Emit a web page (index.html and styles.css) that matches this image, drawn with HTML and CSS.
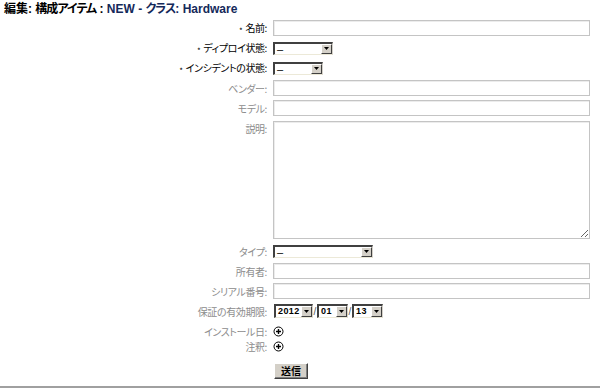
FILE: index.html
```html
<!DOCTYPE html>
<html lang="ja">
<head>
    <meta charset="UTF-8">
    <title>編集: 構成アイテム</title>
    <link rel="stylesheet" href="styles.css">
</head>
<body>

    <h1 class="titulo">編集: <span class="kana">構成アイテム</span> : <span class="destaque">NEW - <span class="kana">クラス</span>: Hardware</span></h1>

    <form class="formulario" id="formItem">
        <div class="linha obrigatorio">
            <label for="nome"><span class="marca">*</span>名前:</label>
            <input type="text" id="nome" class="texto">
        </div>
        <div class="linha obrigatorio">
            <label><span class="marca">*</span>ディプロイ状態:</label>
            <span class="seletor seletor-implantacao"><span class="valor">–</span><span class="seta"><svg width="5" height="3" viewBox="0 0 5 3"><path d="M0 0h5L2.5 3z" fill="#000"/></svg></span></span>
        </div>
        <div class="linha obrigatorio">
            <label><span class="marca">*</span>インシデントの状態:</label>
            <span class="seletor seletor-incidente"><span class="valor">–</span><span class="seta"><svg width="5" height="3" viewBox="0 0 5 3"><path d="M0 0h5L2.5 3z" fill="#000"/></svg></span></span>
        </div>
        <div class="linha">
            <label for="fornecedor">ベンダー:</label>
            <input type="text" id="fornecedor" class="texto">
        </div>
        <div class="linha">
            <label for="modelo">モデル:</label>
            <input type="text" id="modelo" class="texto">
        </div>
        <div class="linha linha-alta">
            <label for="descricao">説明:</label>
            <textarea id="descricao" class="descricao"></textarea>
        </div>
        <div class="linha">
            <label>タイプ:</label>
            <span class="seletor seletor-tipo"><span class="valor">–</span><span class="seta"><svg width="5" height="3" viewBox="0 0 5 3"><path d="M0 0h5L2.5 3z" fill="#000"/></svg></span></span>
        </div>
        <div class="linha">
            <label for="dono">所有者:</label>
            <input type="text" id="dono" class="texto">
        </div>
        <div class="linha">
            <label for="serie">シリアル番号:</label>
            <input type="text" id="serie" class="texto">
        </div>
        <div class="linha">
            <label>保証の有効期限:</label>
            <div class="data">
                <span class="seletor seletor-ano"><span class="valor numero">2012</span><span class="seta"><svg width="5" height="3" viewBox="0 0 5 3"><path d="M0 0h5L2.5 3z" fill="#000"/></svg></span></span>
                <span class="barra">/</span>
                <span class="seletor seletor-mes"><span class="valor numero">01</span><span class="seta"><svg width="5" height="3" viewBox="0 0 5 3"><path d="M0 0h5L2.5 3z" fill="#000"/></svg></span></span>
                <span class="barra">/</span>
                <span class="seletor seletor-dia"><span class="valor numero">13</span><span class="seta"><svg width="5" height="3" viewBox="0 0 5 3"><path d="M0 0h5L2.5 3z" fill="#000"/></svg></span></span>
            </div>
        </div>
        <div class="linha linha-icone">
            <label>インストール日:</label>
            <svg class="mais" width="11" height="11" viewBox="0 0 11 11"><circle cx="5.5" cy="5.5" r="4.5" fill="none" stroke="#000" stroke-width="1"/><path d="M5.5 3v5M3 5.5h5" stroke="#000" stroke-width="1.4"/></svg>
        </div>
        <div class="linha linha-icone">
            <label>注釈:</label>
            <svg class="mais" width="11" height="11" viewBox="0 0 11 11"><circle cx="5.5" cy="5.5" r="4.5" fill="none" stroke="#000" stroke-width="1"/><path d="M5.5 3v5M3 5.5h5" stroke="#000" stroke-width="1.4"/></svg>
        </div>
        <div class="linha linha-botao">
            <span class="vazio"></span>
            <button type="submit" class="enviar">送信</button>
        </div>
    </form>

    <div class="rodape"></div>

</body>
</html>
```

FILE: styles.css
```css
body {
    margin: 0;
    font-family: "Noto Sans CJK JP", "Liberation Sans", sans-serif;
    font-size: 10px;
    color: #000;
    background: #fff;
}
.titulo {
    margin: 0;
    padding: 3px 4px 0;
    height: 15px;
    font-family: "Liberation Sans", "Noto Sans CJK JP", sans-serif;
    font-size: 12px;
    line-height: 13px;
    font-weight: bold;
    font-feature-settings: "palt";
}
.kana {
    letter-spacing: -1px;
}
.destaque {
    color: #14295a;
}
.linha {
    display: flex;
    align-items: center;
    gap: 6px;
    height: 20px;
}
.linha label,
.linha .vazio {
    width: 267px;
    flex: none;
    text-align: right;
    color: #8c8c8c;
    font-feature-settings: "palt";
    letter-spacing: -0.4px;
    white-space: nowrap;
}
.obrigatorio label {
    color: #000;
}
.marca {
    font-size: 8px;
    margin-right: 3px;
    vertical-align: -2px;
}
.texto {
    box-sizing: border-box;
    width: 317px;
    height: 16px;
    margin: 0;
    padding: 0 2px;
    border: 1px solid #c4c4c4;
    box-shadow: inset 1px 1px 0 #ececec;
    font-size: 10px;
}
.linha-alta {
    height: auto;
    align-items: flex-start;
    padding-top: 3px;
    margin-bottom: 2px;
}
.linha-alta label {
    line-height: 16px;
}
.descricao {
    box-sizing: border-box;
    width: 317px;
    height: 118px;
    margin: 0;
    border: 1px solid #c4c4c4;
    box-shadow: inset 1px 1px 0 #ececec;
    resize: both;
}
.seletor {
    box-sizing: border-box;
    display: inline-flex;
    height: 13px;
    border-top: 2px solid #404040;
    border-left: 2px solid #404040;
    border-right: 1px solid #d4d0c8;
    border-bottom: 1px solid #ece9d8;
    background: #fff;
}
.seletor-implantacao { width: 60px; }
.seletor-incidente { width: 50px; }
.seletor-tipo { width: 100px; }
.seletor-ano { width: 39px; height: 14px; }
.seletor-mes { width: 31px; height: 14px; }
.seletor-dia { width: 31px; height: 14px; }
.valor {
    flex: 1;
    padding-left: 2px;
    line-height: 10px;
    font-family: "Liberation Sans", sans-serif;
    font-size: 11px;
}
.numero {
    font-size: 9px;
    font-weight: bold;
    letter-spacing: 0.4px;
    line-height: 11px;
}
.seta {
    box-sizing: border-box;
    width: 11px;
    display: flex;
    align-items: center;
    justify-content: center;
    background: #d4d0c8;
    border: 1px solid;
    border-color: #fff #404040 #404040 #fff;
}
.data {
    display: flex;
    align-items: center;
    margin-left: 1px;
}
.barra {
    width: 4px;
    text-align: center;
    color: #555;
    font-family: "Liberation Sans", sans-serif;
    font-size: 10px;
}
.linha-icone {
    height: 16px;
    margin-top: 2px;
}
.linha-icone + .linha-icone {
    height: 15px;
    margin-top: 0;
}
.linha-botao {
    height: 16px;
    margin-top: 9px;
}
.enviar {
    box-sizing: border-box;
    width: 34px;
    height: 16px;
    margin: 0 0 0 1px;
    padding: 0;
    font-family: "Noto Sans CJK JP", sans-serif;
    font-size: 10px;
    font-weight: bold;
    line-height: 12px;
    background: #d4d0c8;
    border: 1px solid;
    border-color: #fff #404040 #404040 #fff;
    box-shadow: inset -1px -1px 0 #808080;
}
.rodape {
    margin-top: 7px;
    height: 1px;
    border-top: 2px solid #a0a0a0;
    background: #f0f0f0;
}
```
